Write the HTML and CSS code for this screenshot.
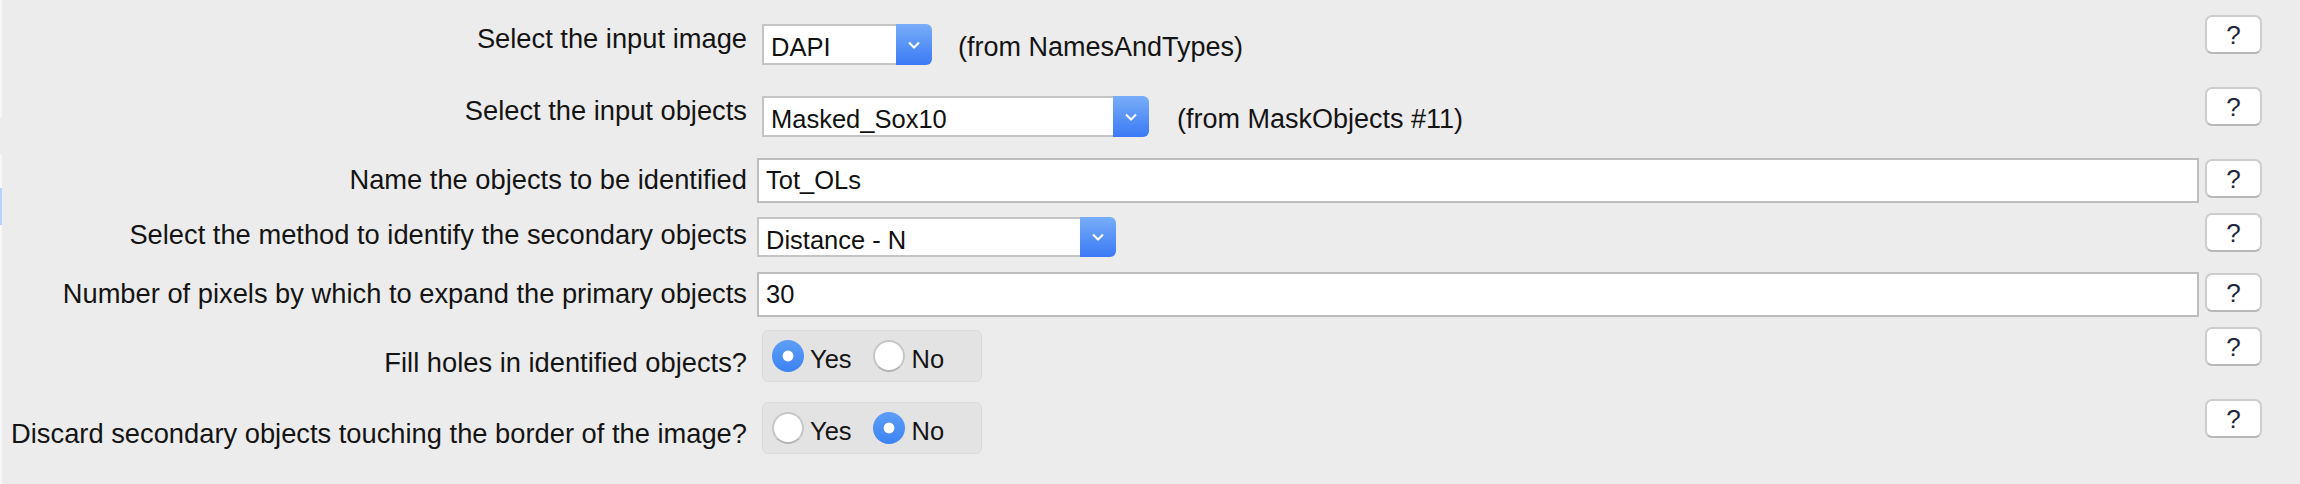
FILE: index.html
```html
<!DOCTYPE html>
<html lang="en">
<head>
<meta charset="utf-8">
<title>IdentifySecondaryObjects settings</title>
<link rel="stylesheet" href="styles.css">
</head>
<body>
<div class="edge">
  <div class="seg seg-light seg-top"></div>
  <div class="seg seg-gap"></div>
  <div class="seg seg-light seg-mid"></div>
  <div class="seg seg-sel"></div>
  <div class="seg seg-light seg-rest"></div>
</div>
<main class="form">
  <div class="row row-select">
    <div class="label">Select the input image</div>
    <div class="control">
      <div class="select select-dapi">
        <span class="select-value">DAPI</span>
        <span class="select-arrow"><svg width="14" height="8" viewBox="0 0 14 8"><polyline points="2,1.5 7,6.5 12,1.5" fill="none" stroke="#fff" stroke-width="2"/></svg></span>
      </div>
      <span class="note">(from NamesAndTypes)</span>
    </div>
    <div class="help-cell"><button class="help" type="button">?</button></div>
  </div>

  <div class="row row-select">
    <div class="label">Select the input objects</div>
    <div class="control">
      <div class="select select-masked">
        <span class="select-value">Masked_Sox10</span>
        <span class="select-arrow"><svg width="14" height="8" viewBox="0 0 14 8"><polyline points="2,1.5 7,6.5 12,1.5" fill="none" stroke="#fff" stroke-width="2"/></svg></span>
      </div>
      <span class="note note-wide">(from MaskObjects #11)</span>
    </div>
    <div class="help-cell"><button class="help" type="button">?</button></div>
  </div>

  <div class="row row-text">
    <div class="label">Name the objects to be identified</div>
    <div class="control">
      <input class="field" type="text" value="Tot_OLs">
    </div>
    <div class="help-cell"><button class="help" type="button">?</button></div>
  </div>

  <div class="row row-method">
    <div class="label">Select the method to identify the secondary objects</div>
    <div class="control">
      <div class="select select-method">
        <span class="select-value">Distance - N</span>
        <span class="select-arrow"><svg width="14" height="8" viewBox="0 0 14 8"><polyline points="2,1.5 7,6.5 12,1.5" fill="none" stroke="#fff" stroke-width="2"/></svg></span>
      </div>
    </div>
    <div class="help-cell"><button class="help" type="button">?</button></div>
  </div>

  <div class="row row-text">
    <div class="label">Number of pixels by which to expand the primary objects</div>
    <div class="control">
      <input class="field" type="text" value="30">
    </div>
    <div class="help-cell"><button class="help" type="button">?</button></div>
  </div>

  <div class="row row-radio">
    <div class="label">Fill holes in identified objects?</div>
    <div class="control">
      <div class="radio-group">
        <span class="radio"><span class="dot dot-on"></span><span class="radio-text">Yes</span></span>
        <span class="radio"><span class="dot"></span><span class="radio-text">No</span></span>
      </div>
    </div>
    <div class="help-cell"><button class="help" type="button">?</button></div>
  </div>

  <div class="row row-radio row-radio-last">
    <div class="label">Discard secondary objects touching the border of the image?</div>
    <div class="control">
      <div class="radio-group">
        <span class="radio"><span class="dot"></span><span class="radio-text">Yes</span></span>
        <span class="radio"><span class="dot dot-on"></span><span class="radio-text">No</span></span>
      </div>
    </div>
    <div class="help-cell"><button class="help" type="button">?</button></div>
  </div>
</main>
</body>
</html>
```

FILE: styles.css
```css
* { box-sizing: border-box; }

html, body { margin: 0; padding: 0; }

body {
  width: 2300px;
  height: 484px;
  overflow: hidden;
  background: #ececec;
  display: flex;
  font-family: "Liberation Sans", Arial, Helvetica, sans-serif;
  color: #141414;
}

/* thin edge of the neighbouring list panel */
.edge {
  flex: none;
  width: 2px;
  display: flex;
  flex-direction: column;
}
.seg-light { background: #f7f7f7; }
.seg-top { height: 118px; }
.seg-gap { height: 36px; }
.seg-mid { height: 34px; }
.seg-sel { height: 37px; background: #b5d4fd; }
.seg-rest { flex: 1; }

.form {
  flex: 1;
  display: grid;
  grid-template-columns: 745px 1fr 57px;
  grid-template-rows: 72px 71px 55px 59px 55px 72px 1fr;
  padding: 15px 38px 0 0;
}

.row { display: contents; }

.label {
  align-self: start;
  text-align: right;
  white-space: nowrap;
  font-size: 27.3px;
  line-height: 31px;
}

.control {
  align-self: start;
  display: flex;
  align-items: baseline;
  padding: 0 6px 0 10px;
}

.help-cell { align-self: start; }

/* row variants */
.row-select .label { margin-top: 8px; }
.row-select .control { margin-top: 9px; padding-left: 15px; }

.row-text .label { margin-top: 6px; }
.row-text .help-cell { margin-top: 1px; }

.row-method .label { margin-top: 6px; }
.row-method .control { margin-top: 4px; }

.row-radio .label { margin-top: 20px; }
.row-radio-last .label { margin-top: 19px; }
.row-radio .control { margin-top: 3px; padding-left: 15px; }

/* dropdowns */
.select {
  flex: none;
  display: inline-flex;
  height: 41px;
}
.select-dapi { width: 170px; }
.select-masked { width: 387px; }
.select-method { width: 359px; height: 40px; }

.select-value {
  flex: 1;
  min-width: 0;
  height: 100%;
  background: #fff;
  border: 2px solid #c4c4c4;
  border-right: 0;
  padding: 5px 0 0 7px;
  font-size: 25.5px;
  line-height: 32px;
  white-space: nowrap;
  color: #111;
}

.select-arrow {
  flex: none;
  width: 36px;
  height: 100%;
  border-radius: 0 6px 6px 0;
  background: linear-gradient(#78aef8, #3a79f5);
  display: flex;
  align-items: center;
  justify-content: center;
}
.select-arrow svg { display: block; }

.note {
  margin-left: 26px;
  font-size: 27px;
  white-space: nowrap;
}
.note-wide { margin-left: 28px; }

/* text fields */
.field {
  display: block;
  flex: 1;
  width: 100%;
  height: 45px;
  margin: 0;
  border: 2px solid #bdbdbd;
  border-radius: 0;
  background: #fff;
  padding: 0 7px;
  font-family: "Liberation Sans", Arial, Helvetica, sans-serif;
  font-size: 25.5px;
  color: #111;
  outline: none;
}

/* radio groups */
.radio-group {
  display: inline-flex;
  align-items: center;
  width: 220px;
  height: 52px;
  padding-left: 9px;
  background: #e3e3e3;
  border: 1px solid #dadada;
  border-radius: 6px;
}
.radio {
  display: inline-flex;
  align-items: center;
  gap: 6px;
}
.radio + .radio { margin-left: 21px; }
.radio + .radio .radio-text { margin-left: 1px; }

.dot {
  flex: none;
  width: 32px;
  height: 32px;
  border-radius: 50%;
  background: #fff;
  border: 2px solid #c6c6c6;
  border-bottom-color: #b4b4b4;
}
.dot-on {
  border: 0;
  background:
    radial-gradient(circle, #fff 0 5px, rgba(255,255,255,0) 5.8px),
    linear-gradient(#5e9ef7, #3c83f4);
}

.radio-text {
  font-size: 25.5px;
  line-height: 30px;
  padding-top: 6px;
  color: #141414;
}

/* help buttons */
.help {
  display: flex;
  align-items: center;
  justify-content: center;
  width: 57px;
  height: 39px;
  padding: 0;
  margin: 0;
  background: #fff;
  border: 2px solid #cdcdcd;
  border-bottom-color: #b8b8b8;
  border-radius: 7px;
  font-family: "Liberation Sans", Arial, Helvetica, sans-serif;
  font-size: 26px;
  line-height: 26px;
  color: #1f2740;
}
```
